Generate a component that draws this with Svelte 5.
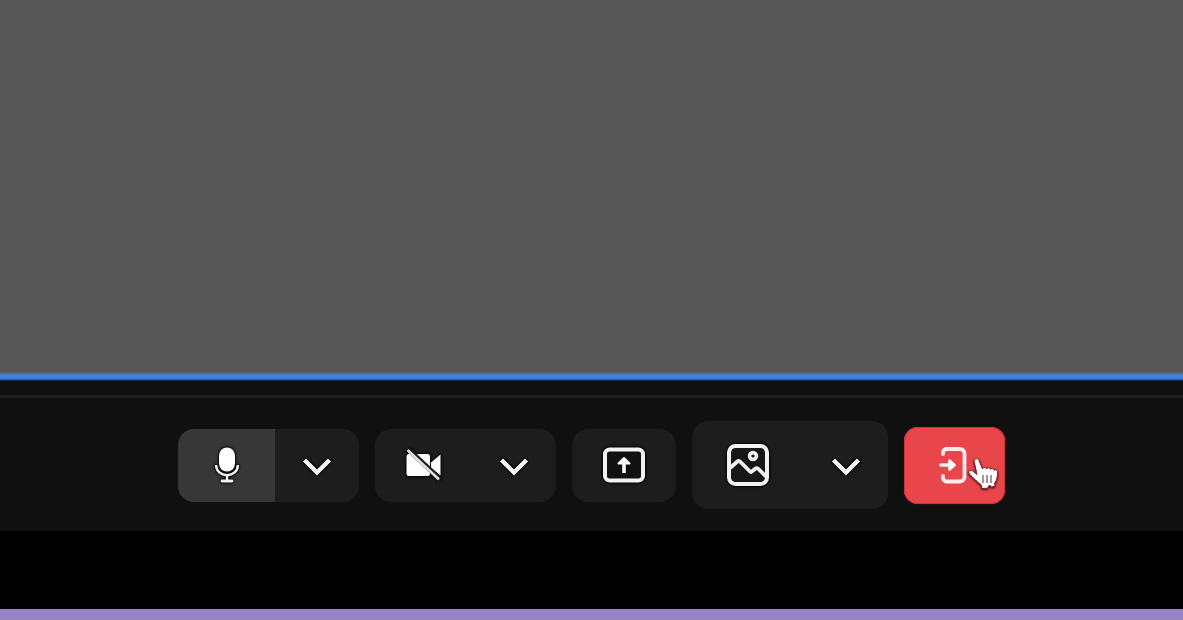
<script>
  let micOn = $state(true);
  let cameraOn = $state(false);
</script>

{#snippet chevron()}
  <svg class="icon" width="32" height="24" viewBox="0 0 32 24" aria-hidden="true">
    <path d="M3.500 7 16 19.500 28.500 7" fill="none" stroke="#f4f4f4" stroke-width="4.400" />
  </svg>
{/snippet}

<div class="page">
  <main class="stage" aria-label="Shared video"></main>
  <div class="edge"></div>
  <footer class="dock">
    <div class="controls" role="toolbar" aria-label="Call controls">
      <div class="group">
        <button class="main lit" aria-label="Microphone" aria-pressed={micOn} onclick={() => (micOn = !micOn)}>
          <svg class="icon" width="32" height="40" viewBox="0 0 32 40" aria-hidden="true">
            <rect x="8" y="2.500" width="16" height="24" rx="8" fill="#fff" />
            <path d="M5.200 20v.8a10.800 9.400 0 0 0 21.600 0V20M16 30v5" fill="none" stroke="#f2f2f2" stroke-width="2.400" />
            <path d="M11 36h10" stroke="#f2f2f2" stroke-width="2.800" stroke-linecap="round" />
          </svg>
        </button>
        <button class="more" aria-label="Microphone options">{@render chevron()}</button>
      </div>

      <div class="group">
        <button class="main" aria-label="Camera" aria-pressed={cameraOn} onclick={() => (cameraOn = !cameraOn)}>
          <svg class="icon" width="40" height="36" viewBox="0 0 40 36" aria-hidden="true">
            <rect x="2.500" y="7" width="23.500" height="22" rx="2.500" fill="#fff" />
            <path d="M27 15.500 36.500 7.500v21L27 21z" fill="#fff" />
            <path d="M5 3 36 32" stroke="#1d1d1d" stroke-width="5" />
            <path d="M3.500 3 35 32.500" stroke="#e2e2e2" stroke-width="2.600" />
          </svg>
        </button>
        <button class="more" aria-label="Camera options">{@render chevron()}</button>
      </div>

      <button class="group share" aria-label="Share screen">
        <svg class="icon" width="44" height="36" viewBox="0 0 44 36" aria-hidden="true">
          <rect x="3" y="2.500" width="38" height="31" rx="4.500" fill="#111" stroke="#f2f2f2" stroke-width="4" />
          <path d="M22 26V14" stroke="#fff" stroke-width="3.600" />
          <path d="M16.500 16.500 22 11l5.500 5.500z" fill="#fff" stroke="#fff" stroke-width="2" stroke-linejoin="round" />
        </svg>
      </button>

      <div class="group tall">
        <button class="picture" aria-label="Background">
          <svg class="icon" width="44" height="44" viewBox="0 0 44 44" aria-hidden="true">
            <rect x="3" y="3" width="38" height="38" rx="6.500" fill="#171717" stroke="#f2f2f2" stroke-width="4" />
            <path d="M4 25 12 18Q13 17.500 14 18.500L24 28.500Q25 29.500 26.500 28L29.500 25.500Q31 24.500 32.500 26L40 33.500" fill="none" stroke="#f2f2f2" stroke-width="3.800" stroke-linejoin="round" />
            <circle cx="27" cy="13" r="3.400" fill="none" stroke="#f2f2f2" stroke-width="3.600" />
          </svg>
        </button>
        <button class="more" aria-label="Background options">{@render chevron()}</button>
      </div>

      <button class="leave" aria-label="Leave call">
        <svg width="32" height="40" viewBox="0 0 32 40" aria-hidden="true">
          <g fill="none" stroke="#ffecec" stroke-width="3.800" stroke-linecap="round" stroke-linejoin="round">
            <path d="M4 9V7.500A3.500 3.500 0 0 1 7.500 4H21A4.500 4.500 0 0 1 25.500 8.500v23.500a4.500 4.500 0 0 1-4.500 4.500H7.500A3.500 3.500 0 0 1 4 33v-2" />
            <path d="M2 20H13" stroke-width="3.600" />
          </g>
          <path d="m10.500 15.500 5 4.500-5 4.500z" fill="#fff" stroke="#fff" stroke-width="2.600" stroke-linejoin="round" />
        </svg>
        <svg class="pointer" width="36" height="36" viewBox="0 0 36 36" aria-hidden="true">
          <path d="M8.500 3C10 2 11.500 3 12 4.500l3.500 8.500c.5-2 3.500-2 4 0 .8-1.800 3.600-1.600 4 .3 1-1.500 3.500-.8 3.800 1 1.200-1.300 3.200-.3 3.200 1.400 0 5-.5 8.500-3 11.500l.5 3-3.500.8-2-2-2 3.200-5.500.3-1-4C10 26 7.500 23 5 20.500c-2-1.800-3.800-3-3.300-4.700.7-2 3.500-1.500 5 0l3.300 2.700L7.200 5.500C7 4.300 7.500 3.500 8.500 3z" fill="#fff" stroke="#7d2429" stroke-width="1" stroke-linejoin="round" />
          <path d="M16 19v8M20 19v8M24 19v8" stroke="#857679" stroke-width="1.500" />
        </svg>
      </button>
    </div>
  </footer>
  <div class="gap"></div>
  <div class="strip"></div>
</div>

<style>
  :global(body) {
    margin: 0;
    background: #000;
  }
  .page {
    min-height: 100vh;
    display: flex;
    flex-direction: column;
    font-family: "Liberation Sans", sans-serif;
  }
  .stage {
    flex: 1;
    background: #575757;
  }
  .edge {
    height: 9px;
    background: linear-gradient(#555b66, #4a73b4 24%, #4783df 42%, #4382e4 68%, #2758a5 86%, #050e27);
  }
  .dock {
    padding-top: 14px;
    background: #101010;
  }
  .controls {
    display: flex;
    justify-content: center;
    align-items: center;
    gap: 16px;
    padding: 23px 16px 22px;
    border-top: 3px solid #202020;
  }
  button {
    display: flex;
    align-items: center;
    justify-content: center;
    flex: none;
    padding: 0;
    border: 0;
    background: none;
    cursor: pointer;
  }
  .group {
    display: flex;
    flex: none;
    height: 73px;
    border-radius: 16px;
    background: #1d1d1d;
    overflow: hidden;
  }
  .main {
    width: 97px;
  }
  .lit {
    background: #373737;
  }
  .more {
    width: 84px;
  }
  .share {
    width: 104px;
  }
  .tall {
    height: 88px;
  }
  .picture {
    width: 112px;
  }
  .leave {
    position: relative;
    width: 101px;
    height: 77px;
    border-radius: 14px;
    background: #e8464b;
    box-shadow: inset 0 0 0 1px #c9363c, 0 0 2px #5a0b0f;
  }
  .icon {
    filter: drop-shadow(0 0 1px #000) drop-shadow(0 0 1px #000);
  }
  .pointer {
    position: absolute;
    right: 2px;
    bottom: 12px;
    filter: drop-shadow(0 1px 1px #3a0a0e);
  }
  .gap {
    height: 78px;
    background: #000;
  }
  .strip {
    height: 11px;
    background: #9682c6;
  }
</style>
